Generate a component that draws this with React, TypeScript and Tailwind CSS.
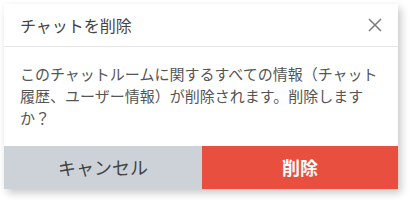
export default function App() {
  return (
    <div className="w-[411px] h-[203px] bg-white p-[4px] pr-[13px]" style={{ fontFamily: '"Noto Sans CJK JP", "Noto Sans", sans-serif' }}>
      <div className="w-[394px] bg-white shadow-[3px_4px_8px_rgba(0,0,0,0.22)] flex flex-col">
        <div className="h-[43px] flex items-center justify-between pl-[16px] pr-[14px] border-b border-[#e6e6e6]">
          <span className="text-[16px] text-[#444] leading-none">チャットを削除</span>
          <svg width="16" height="16" viewBox="0 0 16 16" className="mr-[1px]">
            <path d="M2 2 L14 14 M14 2 L2 14" stroke="#7a7a7a" strokeWidth="1.5" fill="none" />
          </svg>
        </div>
        <div className="pt-[16px] pb-[17px] pl-[16px] pr-[14px] text-[15px] leading-[22px] text-[#555]">
          このチャットルームに関するすべての情報（チャット履歴、ユーザー情報）が削除されます。削除しますか？
        </div>
        <div className="flex h-[43px]">
          <button className="w-[198px] bg-[#cdd2d9] text-[#444] text-[18px] flex items-center justify-center">キャンセル</button>
          <button className="flex-1 bg-[#e84f3e] text-white text-[18px] font-bold flex items-center justify-center">削除</button>
        </div>
      </div>
    </div>
  );
}
